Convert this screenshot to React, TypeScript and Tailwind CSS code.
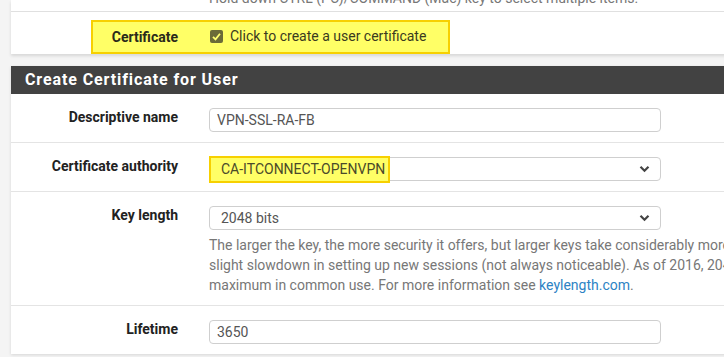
import { ReactNode } from 'react';

function Chevron() {
  return (
    <svg width="11" height="8" viewBox="0 0 11 8" className="shrink-0">
      <path d="M1.5 1.8 L5.5 5.8 L9.5 1.8" fill="none" stroke="#444" strokeWidth="2.2" />
    </svg>
  );
}

function Row({ label, children, last }: { label: string; children: ReactNode; last?: boolean }) {
  return (
    <div className={`flex pt-[13px] pb-[10px] ${last ? '' : 'border-b border-[#e4e4e4]'}`}>
      <div className="w-[183px] shrink-0 pr-[16px] text-right text-[14px] font-bold leading-[20px] text-[#222]">
        {label}
      </div>
      <div className="pl-[15px] pt-[1px] min-w-0">{children}</div>
    </div>
  );
}

function TextInput({ value }: { value: string }) {
  return (
    <div className="w-[452px] h-[24px] rounded-[4px] border border-[#cfcfcf] bg-white px-[7px] text-[14px] leading-[22px] text-[#555]">
      {value}
    </div>
  );
}

function Select({ value, highlight }: { value: string; highlight?: boolean }) {
  return (
    <div className="relative w-[452px] h-[24px] rounded-[4px] border border-[#cfcfcf] bg-white flex items-center justify-between pr-[10px] text-[14px] text-[#555]">
      {highlight && (
        <div className="absolute left-[-1px] top-[-2px] w-[181px] h-[27px] bg-[#ffff66] border-2 border-[#f7d000]" />
      )}
      <span className={`relative pl-[11px] ${highlight ? 'text-[#4a4a2a]' : ''}`}>{value}</span>
      <Chevron />
    </div>
  );
}

export default function App() {
  return (
    <div
      className="w-[724px] h-[357px] overflow-hidden bg-[#f4f4f4] pl-[11px]"
      style={{ fontFamily: 'Roboto, "Liberation Sans", sans-serif' }}
    >
      {/* tail end of the previous panel */}
      <div className="bg-white w-[760px] shadow-[0_2px_3px_rgba(0,0,0,0.12)]">
        <div className="h-[12px] overflow-hidden flex items-end border-b border-[#e0e0e0]">
          <div className="pl-[198px] pb-[3px] text-[14px] leading-[20px] text-[#777] whitespace-nowrap">
            Hold down CTRL (PC)/COMMAND (Mac) key to select multiple items.
          </div>
        </div>
        <div className="relative h-[42px]">
          <div className="absolute left-[80px] top-[8px] w-[359px] h-[34px] bg-[#ffff66] border-2 border-[#f7d000]" />
          <div className="relative flex items-center pt-[14px]">
            <div className="w-[183px] shrink-0 pr-[16px] text-right text-[14px] font-bold leading-[20px] text-[#2a2a1a]">
              Certificate
            </div>
            <div className="pl-[16px] flex items-center gap-[7px] text-[14px] text-[#3a3a20]">
              <svg width="13" height="13" viewBox="0 0 13 13">
                <rect x="0" y="0" width="13" height="13" rx="2" fill="#6b6b38" />
                <path d="M3 6.8 L5.5 9.3 L10 3.8" fill="none" stroke="#ffff70" strokeWidth="1.8" />
              </svg>
              <span>Click to create a user certificate</span>
            </div>
          </div>
        </div>
      </div>

      <div className="mt-[12px] w-[760px] bg-white shadow-[0_1px_3px_rgba(0,0,0,0.12)]">
        <div className="h-[28px] bg-[#424242] pl-[14px] text-[16px] font-bold leading-[28px] tracking-[0.9px] text-white">
          Create Certificate for User
        </div>
        <Row label="Descriptive name">
          <TextInput value="VPN-SSL-RA-FB" />
        </Row>
        <Row label="Certificate authority">
          <Select value="CA-ITCONNECT-OPENVPN" highlight />
        </Row>
        <Row label="Key length">
          <Select value="2048 bits" />
          <div className="mt-[5px] text-[14px] leading-[20px] text-[#777] whitespace-nowrap">
            <div>The larger the key, the more security it offers, but larger keys take considerably more time to generate, and take slightly longer to validate leading to a</div>
            <div>slight slowdown in setting up new sessions (not always noticeable). As of 2016, 2048 bit is the minimum and most common selection and 4096 is the</div>
            <div>
              maximum in common use. For more information see <span className="text-[#2d83c4]">keylength.com</span>.
            </div>
          </div>
        </Row>
        <Row label="Lifetime" last>
          <TextInput value="3650" />
        </Row>
      </div>
    </div>
  );
}
